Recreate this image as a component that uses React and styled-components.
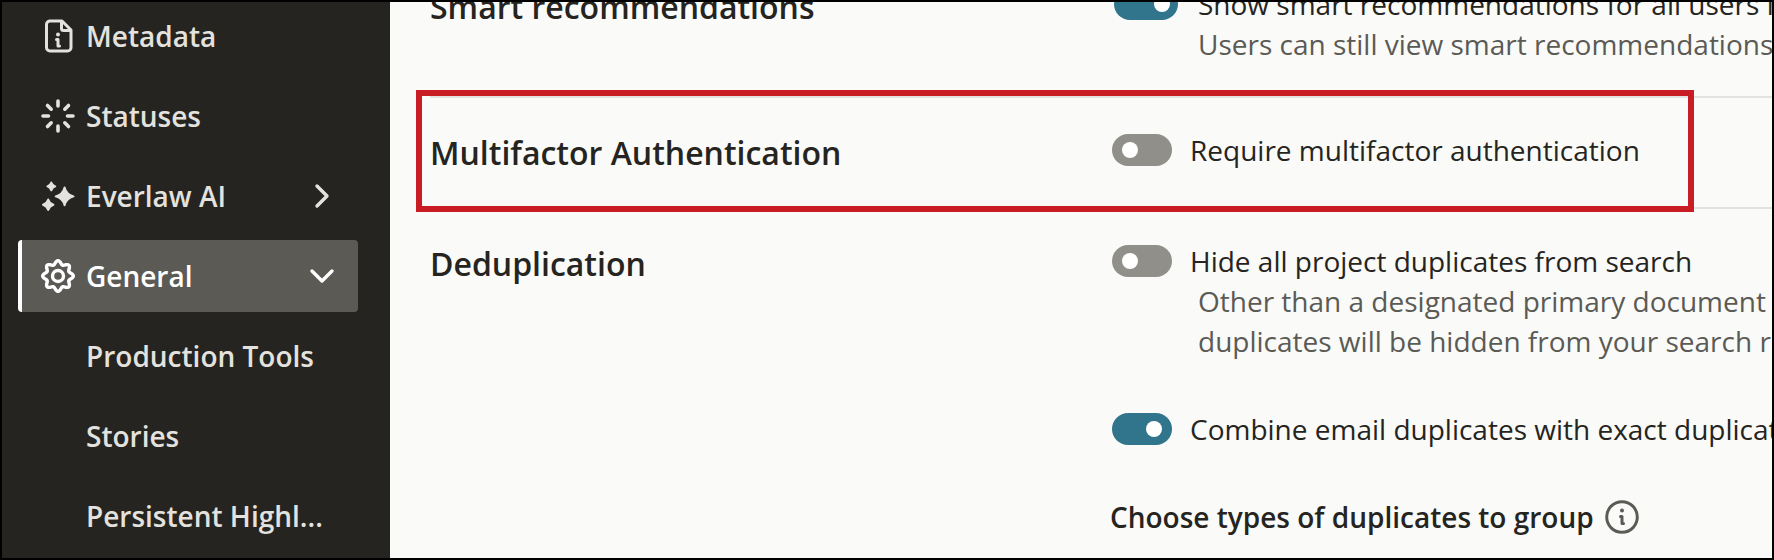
import styled, { createGlobalStyle } from "styled-components";

const NAV_ITEMS = [
  { label: "Metadata", icon: MetadataIcon },
  { label: "Statuses", icon: StatusesIcon },
  { label: "Everlaw AI", icon: SparklesIcon, chevron: "right" },
  { label: "General", icon: GearIcon, chevron: "down", active: true },
  { label: "Production Tools" },
  { label: "Stories" },
  { label: "Persistent Highl..." },
];

const App = () => {
  return (
    <>
      <GlobalStyle />
      <Page>
        <Sidebar />
        <Main>
          <Sections>
            <Section>
              <Title>Smart recommendations</Title>
              <Controls>
                <Option
                  id="smart"
                  label="Show smart recommendations for all users in"
                  wide
                  defaultChecked
                >
                  Users can still view smart recommendations
                </Option>
              </Controls>
            </Section>
            <Section $highlighted>
              <Title>Multifactor Authentication</Title>
              <Controls>
                <Option id="mfa" label="Require multifactor authentication" />
              </Controls>
            </Section>
            <Section>
              <Title>Deduplication</Title>
              <Controls>
                <Option id="hide" label="Hide all project duplicates from search">
                  Other than a designated primary document
                  <br />
                  duplicates will be hidden from your search results
                </Option>
                <Option
                  id="combine"
                  label="Combine email duplicates with exact duplicates"
                  defaultChecked
                />
                <Subheading>
                  Choose types of duplicates to group
                  <InfoButton type="button" aria-label="About duplicate types">
                    <InfoIcon />
                  </InfoButton>
                </Subheading>
              </Controls>
            </Section>
          </Sections>
        </Main>
      </Page>
    </>
  );
};

export default App;

const Sidebar = () => {
  return (
    <Nav>
      {NAV_ITEMS.map(({ label, icon: Icon, chevron, active }) => (
        <NavLink href="#" key={label} $active={active}>
          <IconSlot>{Icon && <Icon />}</IconSlot>
          <NavLabel>{label}</NavLabel>
          {chevron && <Chevron direction={chevron} />}
        </NavLink>
      ))}
    </Nav>
  );
};

const Option = ({ id, label, wide, defaultChecked, children }) => {
  return (
    <div>
      <OptionRow $wide={wide}>
        <Toggle
          type="checkbox"
          role="switch"
          id={id}
          $wide={wide}
          defaultChecked={defaultChecked}
        />
        <label htmlFor={id}>{label}</label>
      </OptionRow>
      {children && <Description>{children}</Description>}
    </div>
  );
};

/*
Icons
*/

function MetadataIcon() {
  return (
    <Svg viewBox="0 0 36 36">
      <path d="M10 3h12l9 9v17.500a3.500 3.500 0 0 1-3.500 3.500H10A3.500 3.500 0 0 1 6.500 29.500V6.500A3.500 3.500 0 0 1 10 3Z" />
      <path d="M21.500 4v6.500a2 2 0 0 0 2 2H30" />
      <path d="M16.500 21.500H18v6.500h1.500" />
      <circle cx="18" cy="16.500" r="2" fill="currentColor" stroke="none" />
    </Svg>
  );
}

function StatusesIcon() {
  return (
    <Svg viewBox="0 0 36 36" strokeWidth="3.6">
      <path d="M18 3v5M18 28v5M3 18h5.500M27.500 18H33M7.500 7.500l3.700 3.700M24.800 11.200l3.700-3.700M7.500 28.500l3.700-3.700M24.800 24.800l3.700 3.700" />
    </Svg>
  );
}

function SparklesIcon() {
  return (
    <Svg viewBox="0 0 36 36" fill="currentColor" strokeWidth="2">
      <path d="M24.600 9.500q1.800 7 8.900 8.900q-7.100 1.900-8.900 8.900q-1.800-7-8.900-8.900q7.100-1.900 8.900-8.900Z" />
      <path d="M11.300 4.500q1 2.900 3.900 3.900q-2.900 1-3.900 3.900q-1-2.900-3.900-3.900q2.900-1 3.900-3.900Z" />
      <path d="M8.200 21.500q1.200 4 5.200 5.200q-4 1.200-5.200 5.200q-1.200-4-5.200-5.200q4-1.200 5.200-5.200Z" />
    </Svg>
  );
}

// eight rounded teeth around the centre
const GEAR_PATH =
  Array.from({ length: 96 }, (_, i) => {
    const angle = (i / 96) * Math.PI * 2;
    const radius = 13.5 + 1.8 * Math.cos(angle * 8);
    const x = 18 + radius * Math.sin(angle);
    const y = 18 - radius * Math.cos(angle);
    return `${i ? "L" : "M"}${x.toFixed(2)} ${y.toFixed(2)}`;
  }).join("") + "Z";

function GearIcon() {
  return (
    <Svg viewBox="0 0 36 36" strokeWidth="3.4">
      <path d={GEAR_PATH} />
      <circle cx="18" cy="18" r="5.500" />
    </Svg>
  );
}

function InfoIcon() {
  return (
    <Svg viewBox="0 0 36 36">
      <circle cx="18" cy="18" r="15.300" />
      <path d="M16.500 17.500H18v7h1.500" />
      <circle cx="18" cy="11.500" r="2" fill="currentColor" stroke="none" />
    </Svg>
  );
}

const Chevron = ({ direction }) => (
  <Svg viewBox="0 0 36 36" strokeWidth="3.4">
    <path
      d={direction === "down" ? "M8 13 18 23 28 13" : "M13 8 23 18 13 28"}
    />
  </Svg>
);

/*
Styles
*/

const GlobalStyle = createGlobalStyle`
  * {
    box-sizing: border-box;
  }

  body {
    margin: 0;
    font-family: "Open Sans", sans-serif;
    font-size: 28px;
    line-height: 40px;
    color: #252420;
    background: #fafaf8;
  }
`;

const Page = styled.div`
  display: flex;
  height: 100vh;
  overflow: hidden;

  /* black frame drawn over the scrolled content */
  &::after {
    content: "";
    position: fixed;
    inset: 0;
    border: 2px solid #000;
    pointer-events: none;
    z-index: 2;
  }
`;

const Nav = styled.nav`
  flex: none;
  display: flex;
  flex-direction: column;
  gap: 8px;
  width: 390px;
  padding: 0 32px 0 18px;
  background: #252420;
`;

const NavLink = styled.a`
  display: flex;
  align-items: center;
  gap: 10px;
  flex: none;
  height: 72px;
  padding: 0 18px;
  border-left: 4px solid ${({ $active }) => ($active ? "#fff" : "transparent")};
  border-radius: 4px;
  color: ${({ $active }) => ($active ? "#fff" : "#e4e2df")};
  background: ${({ $active }) => ($active ? "#5b5a55" : "none")};
  font-weight: 600;
  text-decoration: none;
`;

const IconSlot = styled.span`
  flex: none;
  width: 36px;
  height: 36px;
`;

const NavLabel = styled.span`
  flex: 1;
  white-space: nowrap;
`;

const Svg = styled.svg.attrs(({ fill, strokeWidth }) => ({
  fill: fill || "none",
  stroke: "currentColor",
  strokeWidth: strokeWidth || 3,
  strokeLinecap: "round",
  strokeLinejoin: "round",
  "aria-hidden": true,
}))`
  display: block;
  flex: none;
  width: 36px;
  height: 36px;
`;

const Main = styled.main`
  flex: 1;
  min-width: 0;
  overflow: hidden;
  padding-left: 40px;
`;

const Sections = styled.div`
  margin-top: -50px;
`;

const Section = styled.section`
  position: relative;
  display: grid;
  grid-template-columns: 680px minmax(0, 1fr);
  padding: 32px 0;
  border-top: 2px solid #e2e2e0;

  ${({ $highlighted }) =>
    $highlighted &&
    `
    &::after {
      content: "";
      position: absolute;
      inset: -8px 80px -5px -14px;
      border: 6px solid #c91d26;
      pointer-events: none;
      z-index: 1;
    }
  `}
`;

const Title = styled.h2`
  margin: 0;
  font-size: 32px;
  line-height: 45px;
  font-weight: 600;
`;

const Controls = styled.div`
  display: flex;
  flex-direction: column;
  gap: 48px;
  white-space: nowrap;
`;

const OptionRow = styled.div`
  display: flex;
  align-items: center;
  gap: ${({ $wide }) => ($wide ? "20px" : "18px")};
  padding-left: ${({ $wide }) => ($wide ? "4px" : "2px")};
`;

const Toggle = styled.input`
  appearance: none;
  flex: none;
  display: flex;
  align-items: center;
  width: ${({ $wide }) => ($wide ? "64px" : "60px")};
  height: 32px;
  margin: 0;
  padding: 0 ${({ $wide }) => ($wide ? "8px" : "10px")};
  border-radius: 16px;
  background: #908f89;

  &::before {
    content: "";
    width: 16px;
    height: 16px;
    border-radius: 50%;
    background: #fff;
  }

  &:checked {
    justify-content: flex-end;
    background: #31758c;
  }
`;

const Description = styled.p`
  margin: 0;
  padding-left: 88px;
  color: #5b5a55;
`;

const Subheading = styled.h3`
  display: flex;
  align-items: center;
  gap: 10px;
  margin: 0;
  font-size: 28px;
  font-weight: 600;
`;

const InfoButton = styled.button`
  padding: 0;
  border: 0;
  color: #5b5a55;
  background: none;
`;
